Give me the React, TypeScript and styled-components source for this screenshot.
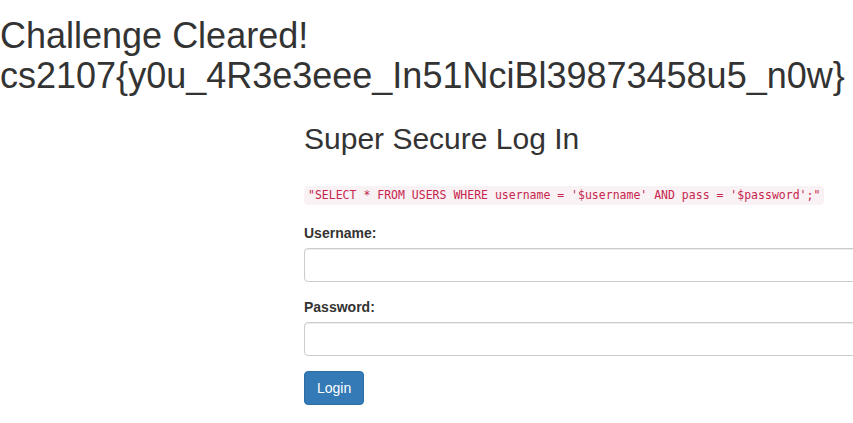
import React from "react";
import styled, { createGlobalStyle } from "styled-components";

const Global = createGlobalStyle`
  html, body {
    margin: 0;
    padding: 0;
    background: #fff;
    overflow: hidden;
  }
  body {
    font-family: "Liberation Sans", Arial, sans-serif;
    font-size: 14px;
    line-height: 1.42857;
    color: #333;
  }
  * { box-sizing: border-box; }
`;

const Page = styled.div`
  width: 853px;
  min-height: 423px;
  overflow: hidden;
`;

const Banner = styled.h1`
  margin: 16px 0 0;
  font-family: "Liberation Sans", Arial, sans-serif;
  font-size: 36px;
  font-weight: 400;
  line-height: 1.1;
  color: #333;
`;

const Container = styled.div`
  padding-left: 304px;
`;

const Panel = styled.div`
  width: 600px;
`;

const Title = styled.h2`
  margin: 27px 0 0;
  font-size: 30px;
  font-weight: 400;
  line-height: 1.1;
  color: #333;
`;

const QueryLine = styled.p`
  margin: 30px 0 0;
  line-height: 19px;
  height: 19px;
`;

const Code = styled.code`
  display: inline-block;
  height: 19px;
  line-height: 19px;
  padding: 0 4px;
  font-family: "DejaVu Sans Mono", "Liberation Mono", monospace;
  font-size: 11.5px;
  color: #c7254e;
  background: #f9f2f4;
  border-radius: 4px;
  white-space: pre;
`;

const Form = styled.form`
  margin-top: 19px;
`;

const Group = styled.div`
  margin-bottom: 15px;
`;

const Label = styled.label`
  display: inline-block;
  margin-bottom: 5px;
  font-weight: 700;
  line-height: 20px;
`;

const Input = styled.input`
  display: block;
  width: 100%;
  height: 34px;
  padding: 6px 12px;
  font-size: 14px;
  font-family: inherit;
  color: #555;
  background: #fff;
  border: 1px solid #ccc;
  border-radius: 4px;
  box-shadow: inset 0 1px 1px rgba(0, 0, 0, 0.075);
  outline: none;
`;

const Button = styled.button`
  display: inline-block;
  height: 34px;
  padding: 6px 12px;
  font-family: "Liberation Sans", Arial, sans-serif;
  font-size: 14px;
  line-height: 20px;
  color: #fff;
  background: #337ab7;
  border: 1px solid #2e6da4;
  border-radius: 4px;
  cursor: pointer;
`;

export default function App() {
  return (
    <Page>
      <Global />
      <Banner>
        Challenge Cleared!
        <br />
        cs2107{"{"}y0u_4R3e3eee_In51NciBl39873458u5_n0w{"}"}
      </Banner>
      <Container>
        <Panel>
          <Title>Super Secure Log In</Title>
          <QueryLine>
            <Code>"SELECT * FROM USERS WHERE username = '$username' AND pass = '$password';"</Code>
          </QueryLine>
          <Form onSubmit={(e) => e.preventDefault()}>
            <Group>
              <Label htmlFor="username">Username:</Label>
              <Input id="username" type="text" name="username" />
            </Group>
            <Group>
              <Label htmlFor="password">Password:</Label>
              <Input id="password" type="password" name="password" />
            </Group>
            <Button type="submit">Login</Button>
          </Form>
        </Panel>
      </Container>
    </Page>
  );
}
